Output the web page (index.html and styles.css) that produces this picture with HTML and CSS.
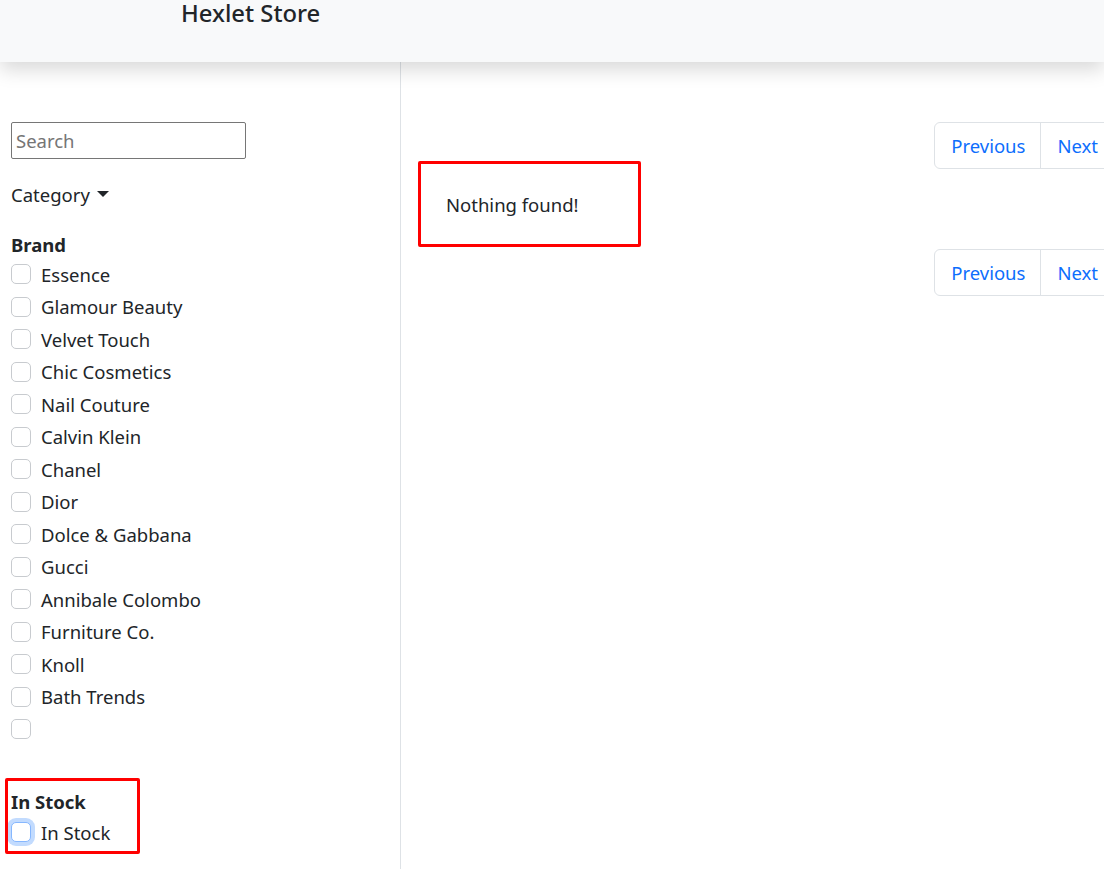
FILE: index.html
```html
<!DOCTYPE html>
<html>
<head>
<meta charset="utf-8">
<link rel="stylesheet" href="styles.css">
</head>
<body>
<header class="navbar">
  <span class="brand-title">Hexlet Store</span>
</header>
<div class="layout">
  <aside class="sidebar">
    <input class="search" type="text" placeholder="Search">
    <div class="category">Category <span class="caret"></span></div>
    <div class="group-title">Brand</div>
    <ul class="checks">
      <li class="check"><span class="box"></span>Essence</li>
      <li class="check"><span class="box"></span>Glamour Beauty</li>
      <li class="check"><span class="box"></span>Velvet Touch</li>
      <li class="check"><span class="box"></span>Chic Cosmetics</li>
      <li class="check"><span class="box"></span>Nail Couture</li>
      <li class="check"><span class="box"></span>Calvin Klein</li>
      <li class="check"><span class="box"></span>Chanel</li>
      <li class="check"><span class="box"></span>Dior</li>
      <li class="check"><span class="box"></span>Dolce &amp; Gabbana</li>
      <li class="check"><span class="box"></span>Gucci</li>
      <li class="check"><span class="box"></span>Annibale Colombo</li>
      <li class="check"><span class="box"></span>Furniture Co.</li>
      <li class="check"><span class="box"></span>Knoll</li>
      <li class="check"><span class="box"></span>Bath Trends</li>
      <li class="check"><span class="box"></span></li>
    </ul>
    <div class="stock">
      <div class="group-title">In Stock</div>
      <div class="check"><span class="box focus"></span>In Stock</div>
      <div class="mark mark-stock"></div>
    </div>
  </aside>
  <main class="content">
    <nav class="pager">
      <a class="page-link">Previous</a>
      <a class="page-link">Next</a>
    </nav>
    <div class="empty">
      <span class="empty-text">Nothing found!</span>
      <div class="mark mark-empty"></div>
    </div>
    <nav class="pager">
      <a class="page-link">Previous</a>
      <a class="page-link">Next</a>
    </nav>
  </main>
</div>
</body>
</html>
```

FILE: styles.css
```css
* { box-sizing: border-box; }
html, body { margin: 0; padding: 0; }
body {
  font-family: "Noto Sans", "Open Sans", sans-serif;
  font-size: 18.5px;
  color: #212529;
  background: #fff;
  overflow: hidden;
  width: 1104px;
  height: 869px;
}
.navbar {
  height: 62px;
  background: #f8f9fa;
  box-shadow: 0 8px 18px rgba(0,0,0,0.15);
  padding-left: 181px;
  position: relative;
  z-index: 2;
}
.brand-title {
  display: block;
  font-size: 23.8px;
  line-height: 26px;
  font-weight: 500;
  color: #212529;
}
.layout {
  display: flex;
  height: 807px;
}
.sidebar {
  width: 401px;
  flex: none;
  border-right: 1px solid #dee2e6;
  padding: 60px 0 0 11px;
}
.search {
  display: block;
  width: 235px;
  height: 37px;
  border: 1px solid #767676;
  border-radius: 2px;
  padding: 0 4px;
  font-family: inherit;
  font-size: 18.5px;
  color: #212529;
  outline: none;
}
.search::placeholder { color: #757575; }
.category {
  margin-top: 21px;
  line-height: 30px;
  display: flex;
  align-items: center;
  gap: 7px;
}
.caret {
  width: 0; height: 0;
  border-left: 6px solid transparent;
  border-right: 6px solid transparent;
  border-top: 6px solid #212529;
  margin-top: -3px;
}
.group-title {
  font-weight: 700;
  line-height: 30px;
}
.category + .group-title { margin-top: 20px; margin-bottom: -1px; }
.checks { list-style: none; margin: 0; padding: 0; }
.check {
  display: flex;
  align-items: center;
  height: 30px;
  margin-bottom: 2.5px;
}
.box {
  width: 20px;
  height: 20px;
  border: 1px solid #c8cbcf;
  border-radius: 5px;
  margin-right: 10px;
  flex: none;
  background: #fff;
}
.box.focus {
  border-color: #86b7fe;
  box-shadow: 0 0 0 4px rgba(13,110,253,0.25);
}
.stock {
  position: relative;
  margin-top: 43px;
}
.mark {
  position: absolute;
  border: 3.5px solid #ff0000;
  border-radius: 2px;
}
.mark-stock {
  left: -6px;
  top: -9px;
  width: 135px;
  height: 76px;
}
.content {
  flex: 1;
  display: flex;
  flex-direction: column;
  align-items: flex-end;
  padding-top: 60px;
  margin-right: -10px;
}
.pager {
  display: flex;
  border: 1px solid #dee2e6;
  border-radius: 6px;
  height: 47px;
}
.page-link {
  display: flex;
  align-items: center;
  padding: 0 15px 0 16px;
  color: #0d6efd;
  text-decoration: none;
}
.page-link + .page-link { border-left: 1px solid #dee2e6; }
.empty {
  align-self: flex-start;
  position: relative;
  margin-left: 45px;
  height: 72px;
  margin-bottom: 8px;
  display: flex;
  align-items: center;
}
.empty-text { line-height: 30px; }
.mark-empty {
  left: -28px;
  top: -8px;
  width: 223px;
  height: 86px;
}
```
